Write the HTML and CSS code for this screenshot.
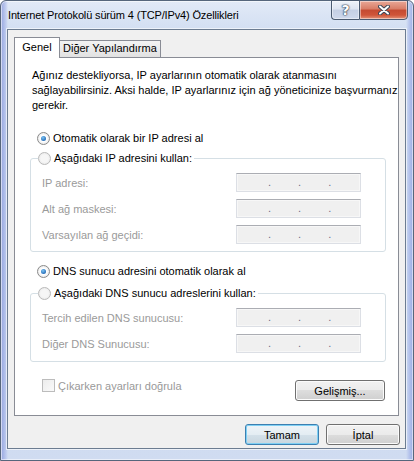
FILE: index.html
```html
<!DOCTYPE html>
<html lang="tr">
<head>
    <meta charset="UTF-8">
    <meta name="viewport" content="width=device-width, initial-scale=1.0">
    <title>Internet Protokolü sürüm 4 (TCP/IPv4) Özellikleri</title>
    <link rel="stylesheet" href="styles.css">
</head>
<body>
    <div class="window">
        <div class="titlebar">
            <span class="title">Internet Protokolü sürüm 4 (TCP/IPv4) Özellikleri</span>
            <div class="caption-buttons">
                <span class="cap-btn help">?</span>
                <span class="cap-btn close">
                    <svg width="12" height="10" viewBox="0 0 12 10">
                        <path d="M2 1.5 L10 8.5 M10 1.5 L2 8.5" stroke="#3b4656" stroke-width="4" stroke-linecap="round"/>
                        <path d="M2 1.5 L10 8.5 M10 1.5 L2 8.5" stroke="#fff" stroke-width="2" stroke-linecap="round"/>
                    </svg>
                </span>
            </div>
        </div>

        <div class="client">
            <div class="tabs">
                <span class="tab active">Genel</span>
                <span class="tab">Diğer Yapılandırma</span>
            </div>

            <div class="panel">
                <p class="intro">Ağınız destekliyorsa, IP ayarlarının otomatik olarak atanmasını<br>sağlayabilirsiniz. Aksi halde, IP ayarlarınız için ağ yöneticinize başvurmanız<br>gerekir.</p>

                <label class="option first"><span class="radio on"></span>Otomatik olarak bir IP adresi al</label>
                <fieldset class="group">
                    <legend><span class="option"><span class="radio"></span>Aşağıdaki IP adresini kullan:</span></legend>
                    <div class="field"><span>IP adresi:</span><span class="ip"><i></i>.<i></i>.<i></i>.<i></i></span></div>
                    <div class="field"><span>Alt ağ maskesi:</span><span class="ip"><i></i>.<i></i>.<i></i>.<i></i></span></div>
                    <div class="field"><span>Varsayılan ağ geçidi:</span><span class="ip"><i></i>.<i></i>.<i></i>.<i></i></span></div>
                </fieldset>

                <label class="option dns"><span class="radio on"></span>DNS sunucu adresini otomatik olarak al</label>
                <fieldset class="group group-dns">
                    <legend><span class="option"><span class="radio"></span>Aşağıdaki DNS sunucu adreslerini kullan:</span></legend>
                    <div class="field"><span>Tercih edilen DNS sunucusu:</span><span class="ip"><i></i>.<i></i>.<i></i>.<i></i></span></div>
                    <div class="field"><span>Diğer DNS Sunucusu:</span><span class="ip"><i></i>.<i></i>.<i></i>.<i></i></span></div>
                </fieldset>

                <div class="panel-foot">
                    <label class="check"><span class="box"></span>Çıkarken ayarları doğrula</label>
                    <button class="btn wide">Gelişmiş...</button>
                </div>
            </div>

            <div class="actions">
                <button class="btn default">Tamam</button>
                <button class="btn">İptal</button>
            </div>
        </div>
    </div>
</body>
</html>
```

FILE: styles.css
```css
body { margin: 0; font-family: "Liberation Sans", Arial, sans-serif; font-size: 11px; color: #000; }

.window { width: 414px; height: 461px; box-sizing: border-box; border: 1px solid #56667c; border-radius: 6px 6px 0 0; box-shadow: inset 0 0 0 1px rgba(255,255,255,0.55);
    background:
        linear-gradient(90deg, rgba(140,156,222,0.75) 1px, rgba(165,180,234,0.45) 5px, rgba(255,255,255,0) 7px, rgba(255,255,255,0) 405px, rgba(160,176,232,0.5) 408px, rgba(140,158,226,0.8) 412px),
        linear-gradient(#e2eaf7, #d3dff2 28px, #c9d7ef 60%, #d0dcf1); }

.titlebar { height: 28px; display: flex; align-items: flex-start; }
.title { padding-left: 7px; line-height: 28px; font-size: 11px; letter-spacing: -0.15px; }
.caption-buttons { display: flex; margin: -1px 5px 0 auto; }
.cap-btn { height: 20px; box-sizing: border-box; border: 1px solid #4a5a70; display: flex; align-items: center; justify-content: center; box-shadow: inset 0 0 0 1px rgba(255,255,255,0.45); }
.help { width: 28px; border-right: none; border-radius: 0 0 0 4px; color: #fff; font: bold 14px "DejaVu Sans", sans-serif; text-shadow: 0 0 1px #2d3a4d, 0 0 1px #2d3a4d, 0 0 2px #2d3a4d;
    background: linear-gradient(#eef2f9, #dde4f1 45%, #c4cfe4 50%, #cfd9ec); }
.close { width: 49px; border-radius: 0 0 4px 0;
    background: linear-gradient(#e9a897, #d87c66 45%, #c44a31 50%, #cf5538 78%, #e39379); }

.client { width: 399px; height: 420px; box-sizing: border-box; margin-left: 6px; border: 1px solid #6c7c91; background: #f0f0f0; padding: 7px 6px 0 6px; box-shadow: 0 0 0 1px rgba(255,255,255,0.6); }

.tabs { display: flex; align-items: flex-start; height: 21px; margin-bottom: -1px; position: relative; z-index: 1; }
.tab { box-sizing: border-box; border: 1px solid #898c95; border-bottom: none; }
.tab.active { width: 46px; height: 21px; line-height: 19px; text-align: center; background: #fff; position: relative; z-index: 1; }
.tab:not(.active) { height: 17px; margin: 3px 0 0 -1px; padding: 0 3px; line-height: 15px; background: linear-gradient(#f3f3f3, #ebebeb 50%, #e1e1e1); }

.panel { border: 1px solid #898c95; background: #fff; padding-bottom: 14px; }
.intro { margin: 10px 0 0 17px; line-height: 15px; }

.option { display: flex; align-items: center; height: 16px; line-height: 16px; white-space: nowrap; }
.option.first { margin: 17px 0 0 22px; }
.option.dns { margin: 11px 0 0 22px; }
.radio { width: 13px; height: 13px; box-sizing: border-box; border-radius: 50%; margin-right: 3px; border: 1px solid #b9b9b9; background: radial-gradient(circle at 50% 50%, #f6f6f6 45%, #e2e2e2 100%); position: relative; }
.radio.on { border-color: #8a8a8a; background: radial-gradient(circle at 50% 50%, #fff 40%, #d9d9d9 100%); }
.radio.on::after { content: ""; position: absolute; left: 3px; top: 3px; width: 5px; height: 5px; border-radius: 50%; background: radial-gradient(circle at 40% 35%, #7cc4f4, #1b62b0 80%); }

.group { margin: 4px 12px 0 15px; padding: 7px 24px 7px 11px; border: 1px solid #d5dfe5; border-radius: 3px; }
.group legend { padding: 0 2px 0 0; margin-left: -4px; }
.group-dns { margin-top: 6px; padding-bottom: 8px; }

.field { display: grid; grid-template-columns: 1fr 125px; align-items: center; height: 19px; color: #9a9a9a; }
.field + .field { margin-top: 7px; }
.ip { height: 19px; box-sizing: border-box; border: 1px solid #dcdfe5; border-top-color: #abadb3; background: #f0f0f0; box-shadow: inset 0 0 0 1px #f7f7f7; display: flex; padding-left: 4px; line-height: 17px; color: #6e6e86; }
.ip i { width: 27px; }

.panel-foot { display: flex; justify-content: space-between; align-items: flex-start; margin: 17px 13px 0 27px; }
.check { display: flex; align-items: center; height: 13px; color: #999; }
.box { width: 13px; height: 13px; box-sizing: border-box; margin-right: 3px; border: 1px solid #bcbcbc; background: linear-gradient(135deg, #ececec, #fafafa); }

.btn { height: 21px; padding: 0; font: 11px "Liberation Sans", Arial, sans-serif; color: #000; border: 1px solid #707070; border-radius: 3px; box-shadow: inset 0 0 0 1px #fbfbfb;
    background: linear-gradient(#f2f2f2, #ebebeb 50%, #dddddd 50%, #cfcfcf); }
.btn.wide { width: 90px; margin-top: 1px; }
.actions { display: flex; justify-content: flex-end; gap: 7px; margin: 8px -1px 0 0; }
.actions .btn { width: 74px; }
.btn.default { border-color: #3c7fb1; box-shadow: inset 0 0 0 1px #7fd0f4; background: linear-gradient(#eef4f8, #e4edf3 50%, #d4e1ea 50%, #c8d6df); }
```
